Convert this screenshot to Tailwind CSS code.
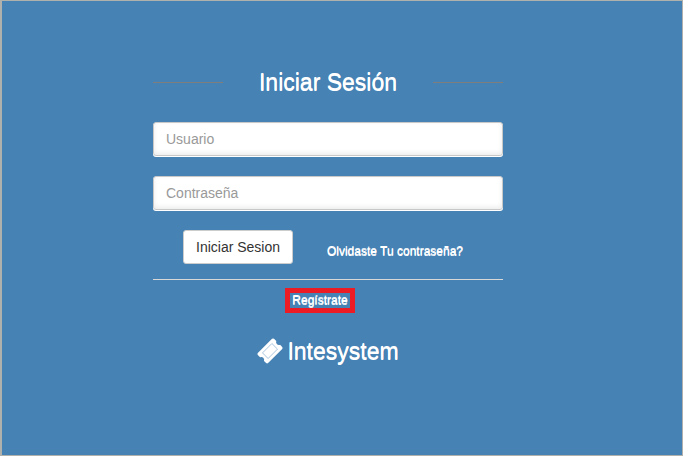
<!DOCTYPE html>
<html lang="es">
<head>
<meta charset="utf-8">
<meta name="viewport" content="width=device-width, initial-scale=1">
<title>Iniciar Sesión</title>
<script src="https://cdn.jsdelivr.net/npm/@tailwindcss/browser@4"></script>
</head>
<body class="min-h-screen border border-l-2 border-[#b0b0ac] bg-[#4682b4] pt-[69px] pr-7 font-['Liberation_Sans',Arial,sans-serif] text-white">
<main class="mx-auto w-full max-w-[350px]">
  <form>
    <h1 class="mb-7 flex h-6 items-center justify-between text-[23px] leading-6 text-shadow-[0_1px_0_#fff]">
      <span class="h-px w-1/5 bg-[#7e7e7e]"></span>
      <span>Iniciar Sesión</span>
      <span class="h-px w-1/5 bg-[#7e7e7e]"></span>
    </h1>
    <input type="text" aria-label="Usuario" placeholder="Usuario" class="mb-5 block h-[34px] w-full rounded-[3px] border border-[#c8c8c8] bg-white px-3 text-sm text-[#555] shadow-[0_1px_0_#fff,inset_0_-2px_5px_rgba(0,0,0,0.08)] placeholder:text-[#999]">
    <input type="password" aria-label="Contraseña" placeholder="Contraseña" class="mb-5 block h-[34px] w-full rounded-[3px] border border-[#c8c8c8] bg-white px-3 text-sm text-[#555] shadow-[0_1px_0_#fff,inset_0_-2px_5px_rgba(0,0,0,0.08)] placeholder:text-[#999]">
    <div class="flex items-center justify-between pr-10 pl-[30px] text-xs text-shadow-[0_1px_0_#fff]">
      <button type="button" class="h-[34px] rounded-[3px] border border-[#ccc] bg-white px-3 text-sm whitespace-nowrap text-[#333] text-shadow-none">Iniciar Sesion</button>
      <a href="#" class="pt-2">Olvidaste Tu contraseña?</a>
    </div>
  </form>
  <div class="mt-[15px] flex flex-col items-center border-t border-[#d8d8d8] pt-2 text-shadow-[0_1px_0_#fff]">
    <a href="#" class="mr-4 border-5 border-[#ed1c24] px-[2px] text-xs leading-[15px]">Regístrate</a>
    <h2 class="mt-6 flex items-center gap-1 text-[23px] leading-7">
      <svg class="size-[26px]" viewBox="0 0 26 26" aria-hidden="true">
        <path fill="#fff" d="M15 .8 Q16 0 17 .8 L19.300 3.100 Q18.600 5 20 6.200 Q21.200 7.400 23.100 6.800 L25.200 8.900 Q26 9.900 25.200 10.900 L11.100 25 Q10.100 25.800 9.100 25 L7 22.900 Q7.600 20.900 6.300 19.700 Q5 18.500 3.100 19.200 L.8 16.900 Q0 15.900 .8 14.900 Z"/>
        <path fill="none" stroke="#a9c5de" stroke-width="1" stroke-linejoin="round" d="M14.900 5.500 L20.500 11.100 L11.100 20.500 L5.500 14.900 Z"/>
      </svg>
      <span>Intesystem</span>
    </h2>
  </div>
</main>
</body>
</html>
